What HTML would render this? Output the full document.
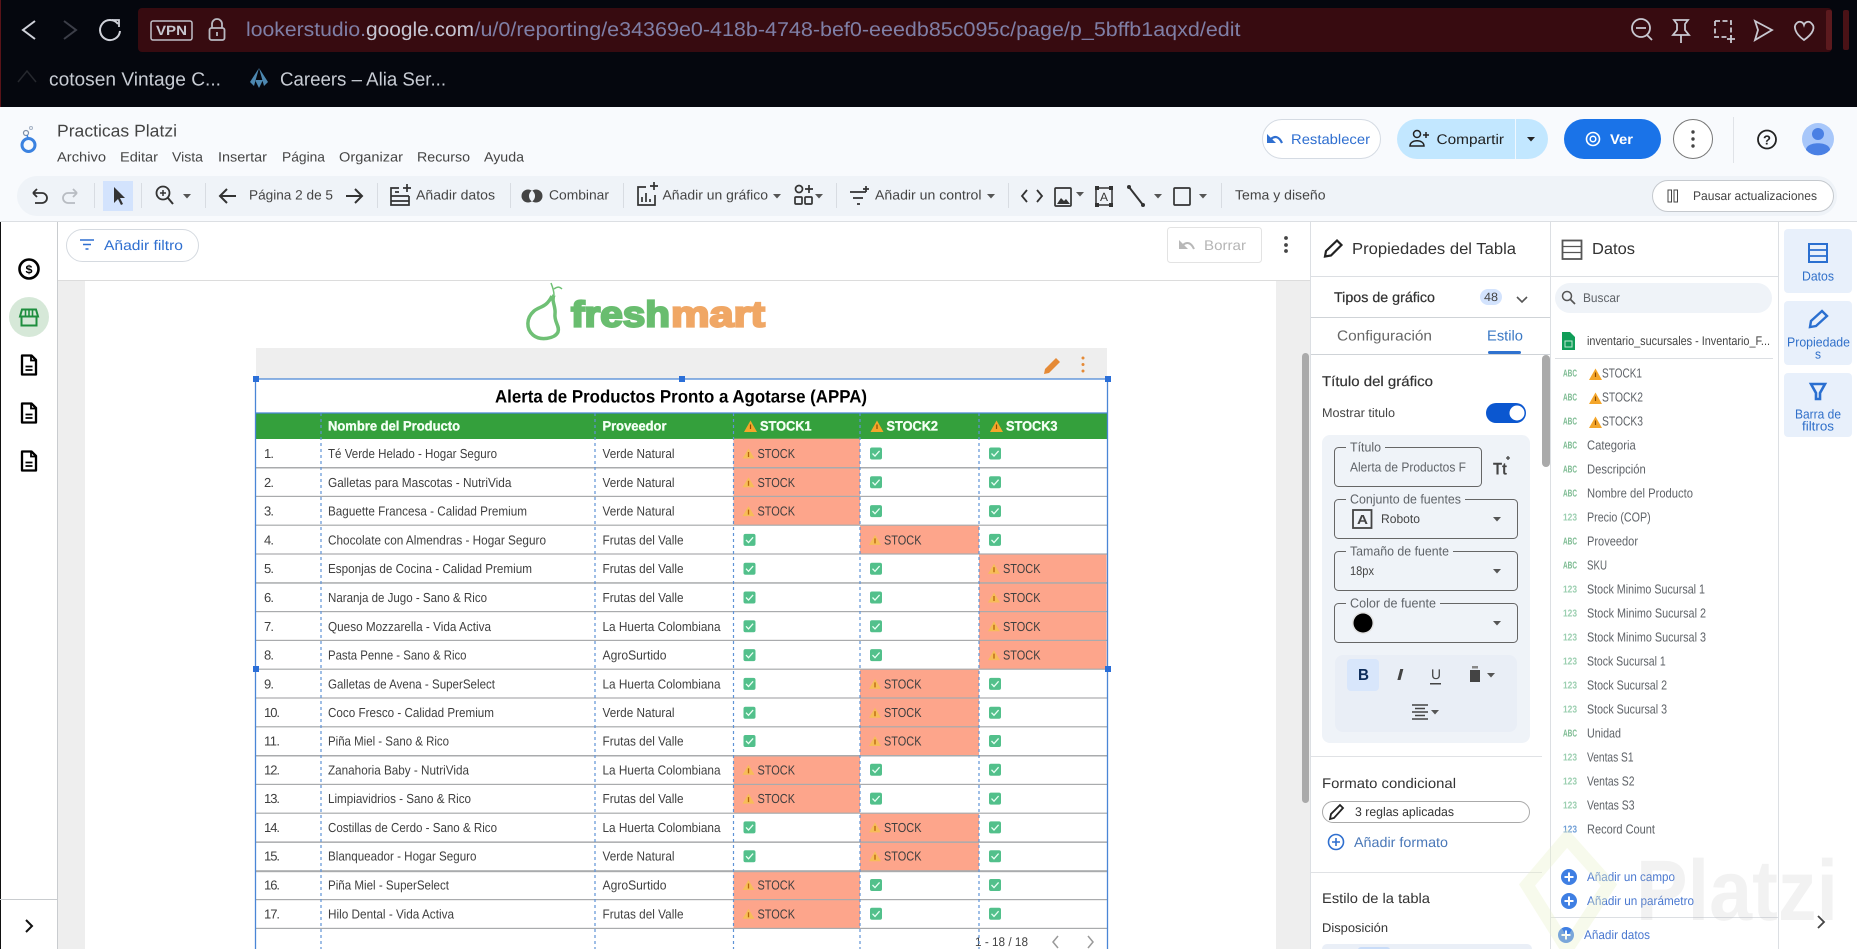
<!DOCTYPE html>
<html lang="es"><head><meta charset="utf-8"><title>Looker Studio</title>
<style>
html,body{margin:0;padding:0;background:#fff;width:1857px;height:949px;overflow:hidden}
svg{display:block;filter:blur(.35px)}
text{font-family:"Liberation Sans",sans-serif;dominant-baseline:central;fill:#444;text-rendering:geometricPrecision}
.t text{font-size:13px;fill:#3f3f3f}
.f text{font-size:13px;fill:#5f6368}
.ty{font-size:10px;font-weight:bold}
.h{fill:#f3fff3;stroke:#f3fff3;stroke-width:.35}
</style></head><body>
<svg xmlns="http://www.w3.org/2000/svg" width="1857" height="949" viewBox="0 0 1857 949">
<defs>
<g id="w"><path d="M15-5 21 5H9Z" fill="#f7bd58"/><path d="M15-1.500V3.500" stroke="#b8650c" stroke-width="1.300"/></g>
<g id="k"><rect x="10" y="-6" width="12" height="12" rx="2" fill="#52c08b"/><path d="M12.500 0 15 2.600 19.600-2.600" fill="none" stroke="#eafff4" stroke-width="1.300"/></g>
<g id="W"><path d="M6.500-6.500 13 5H0Z" fill="#f4a62a"/><path d="M6.500-2.500V2" stroke="#8a4a00" stroke-width="1.200"/></g>
<g id="d"><path d="M-7-9.500H2.500L7-5V9.500H-7Z" fill="#fff" stroke="#000" stroke-width="2.300" stroke-linejoin="round"/><path d="M2-9V-4.500H7" fill="none" stroke="#000" stroke-width="1.800"/><path d="M-3.500 1.500H3.500M-3.500 5H3.500" stroke="#000" stroke-width="1.800"/></g>
<g id="a"><path d="M-4-2H4L0 2.500Z" fill="#555"/></g>
<g id="p"><circle r="8" fill="#3f7fe3"/><path d="M-4.500 0H4.500M0-4.500V4.500" stroke="#fff" stroke-width="2"/></g>
</defs>

<!-- browser chrome -->
<rect width="1857" height="107" fill="#05070e"/>
<rect width="1" height="107" fill="#5a1318"/>
<rect x="138" y="8" width="1694" height="44" rx="4" fill="#370b10"/>
<rect x="1826" y="10" width="6" height="40" rx="2" fill="#5c1a1e"/>
<rect x="1843" y="10" width="6" height="40" rx="2" fill="#4a1216"/>
<path d="M35 21 23 30 35 39" fill="none" stroke="#d0d2da" stroke-width="2"/>
<path d="M64 21 76 30 64 39" fill="none" stroke="#3c3e48" stroke-width="2"/>
<path d="M118 24A10 10 0 1 0 120 31" fill="none" stroke="#d0d2da" stroke-width="2"/><path d="M112 20 119 20 119 27" fill="none" stroke="#d0d2da" stroke-width="1.800"/>
<rect x="151" y="21" width="41" height="19" rx="2" fill="none" stroke="#c0c0c8" stroke-width="1.500"/>
<text x="156" y="30.500" font-size="13.500" textLength="31" lengthAdjust="spacingAndGlyphs" style="fill:#c8c8d0;font-weight:bold">VPN</text>
<rect x="209.500" y="28" width="15" height="12" rx="2" fill="none" stroke="#b8b8c0" stroke-width="1.800"/><path d="M212 28V24A5 5 0 0 1 222 24V28" fill="none" stroke="#b8b8c0" stroke-width="1.800"/><path d="M217 32V36" stroke="#b8b8c0" stroke-width="1.800"/>
<text x="246" y="30" font-size="20" textLength="120" lengthAdjust="spacingAndGlyphs" style="fill:#7f7fa6">lookerstudio.</text>
<text x="366" y="30" font-size="20" textLength="108" lengthAdjust="spacingAndGlyphs" style="fill:#c5c5d2">google.com</text>
<text x="474.500" y="30" font-size="20" textLength="766" lengthAdjust="spacingAndGlyphs" style="fill:#7f7fa6">/u/0/reporting/e34369e0-418b-4748-bef0-eeedb85c095c/page/p_5bffb1aqxd/edit</text>
<g fill="none" stroke="#c8c8d0" stroke-width="1.800">
<circle cx="1641" cy="28" r="9"/><path d="M1636 28H1646M1647 35 1652 40"/>
<path d="M1674 20H1688L1685 24V30L1689 35H1673L1677 30V24ZM1681 35V43"/>
<path d="M1715 21H1731V37M1715 21V37H1727" stroke-dasharray="5 2.500"/><path d="M1731 35V43M1727 39H1735"/>
<path d="M1755 21 1772 30 1755 40 1758 30Z"/>
<path d="M1804 40C1794 33 1794 26 1796 24C1799 20 1803 22 1804 25C1805 22 1809 20 1812 24C1815 27 1814 33 1804 40Z"/>
</g>
<path d="M18 82 27 71 36 82" fill="none" stroke="#26282e" stroke-width="1.500"/>
<text x="49" y="80" font-size="19" textLength="172" lengthAdjust="spacingAndGlyphs" style="fill:#c8ccd4">cotosen Vintage C...</text>
<path d="M259 68 250 82 254 86ZM259 68 268 82 264 86ZM255 80H263L259 88Z" fill="#4d87b0"/>
<text x="280" y="80" font-size="19" textLength="166" lengthAdjust="spacingAndGlyphs" style="fill:#c8ccd4">Careers – Alia Ser...</text>

<!-- app header -->
<rect y="107" width="1857" height="114" fill="#f8fafd"/>
<circle cx="28.500" cy="145" r="6.500" fill="none" stroke="#3b82e0" stroke-width="3"/>
<circle cx="26" cy="133" r="2.500" fill="none" stroke="#7e8fa8" stroke-width="1.200"/><circle cx="31" cy="128" r="1.500" fill="none" stroke="#a5b2c5" stroke-width="1"/>
<path d="M27 135 28 138" stroke="#3b82e0" stroke-width="1.500"/>
<text x="57" y="131" font-size="17" textLength="120" lengthAdjust="spacingAndGlyphs" style="fill:#444">Practicas Platzi</text>
<g font-size="13.500">
<text x="57" y="157" textLength="49" lengthAdjust="spacingAndGlyphs">Archivo</text>
<text x="120" y="157" textLength="38" lengthAdjust="spacingAndGlyphs">Editar</text>
<text x="172" y="157" textLength="31" lengthAdjust="spacingAndGlyphs">Vista</text>
<text x="218" y="157" textLength="49" lengthAdjust="spacingAndGlyphs">Insertar</text>
<text x="282" y="157" textLength="43" lengthAdjust="spacingAndGlyphs">Página</text>
<text x="339" y="157" textLength="64" lengthAdjust="spacingAndGlyphs">Organizar</text>
<text x="417" y="157" textLength="53" lengthAdjust="spacingAndGlyphs">Recurso</text>
<text x="484" y="157" textLength="40" lengthAdjust="spacingAndGlyphs">Ayuda</text>
</g>
<!-- header buttons -->
<rect x="1262.500" y="119.500" width="118" height="39" rx="19.500" fill="#fff" stroke="#d5dbe3"/>
<path d="M1267 134V143H1276Z" fill="#2f6fd0"/><path d="M1271 139C1275 135.500 1279 136.500 1282 143" fill="none" stroke="#2f6fd0" stroke-width="2.200"/>
<text x="1291" y="139" font-size="14" textLength="79" lengthAdjust="spacingAndGlyphs" style="fill:#2f6fd0">Restablecer</text>
<rect x="1397" y="119" width="151" height="40" rx="20" fill="#c2e7ff"/><rect x="1515" y="119" width="1" height="40" fill="#f0f8ff"/>
<circle cx="1417" cy="134" r="3.500" fill="none" stroke="#222" stroke-width="1.500"/><path d="M1410 146C1410 139 1424 139 1424 146Z" fill="none" stroke="#222" stroke-width="1.500"/><path d="M1423 135H1429M1426 132V138" stroke="#222" stroke-width="1.500"/>
<text x="1436.500" y="139" font-size="14" textLength="67.500" lengthAdjust="spacingAndGlyphs" style="fill:#1f1f1f">Compartir</text>
<path d="M1527 137H1535L1531 141.500Z" fill="#222"/>
<rect x="1564" y="119" width="97" height="40" rx="20" fill="#1a73e8"/>
<circle cx="1593" cy="139" r="6.500" fill="none" stroke="#fff" stroke-width="1.600"/><circle cx="1593" cy="139" r="2.800" fill="none" stroke="#fff" stroke-width="1.500"/>
<text x="1610" y="139" font-size="14" font-weight="bold" textLength="23" lengthAdjust="spacingAndGlyphs" style="fill:#fff">Ver</text>
<rect x="1673.500" y="119.500" width="39" height="39" rx="19.500" fill="#fff" stroke="#777"/>
<circle cx="1693" cy="132" r="1.700" fill="#444"/><circle cx="1693" cy="139" r="1.700" fill="#444"/><circle cx="1693" cy="146" r="1.700" fill="#444"/>
<rect x="1733" y="117" width="1" height="46" fill="#e0e3e8"/>
<circle cx="1767" cy="139.500" r="9" fill="none" stroke="#222" stroke-width="1.800"/><text x="1763" y="140" font-size="13" font-weight="bold" textLength="8" lengthAdjust="spacingAndGlyphs" style="fill:#222">?</text>
<circle cx="1818" cy="139" r="16" fill="#a8c7fa"/><circle cx="1818" cy="134" r="6" fill="#4a80e4"/><path d="M1806 150C1806 141 1830 141 1830 150A16 16 0 0 1 1806 150Z" fill="#4a80e4"/>
<!-- toolbar -->
<rect x="17" y="176" width="1820" height="40" rx="20" fill="#eff3f8"/>
<rect y="221" width="1857" height="1" fill="#dcdfe3"/>
<g fill="#d8dce2"><rect x="94" y="183" width="1" height="25"/><rect x="141" y="183" width="1" height="25"/><rect x="205" y="183" width="1" height="25"/><rect x="377" y="183" width="1" height="25"/><rect x="510" y="183" width="1" height="25"/><rect x="623" y="183" width="1" height="25"/><rect x="836" y="183" width="1" height="25"/><rect x="1008" y="183" width="1" height="25"/><rect x="1221" y="183" width="1" height="25"/></g>
<path d="M33 193 37 189M33 193 37 197M33 193H42A5 5 0 0 1 42 203H35" fill="none" stroke="#333" stroke-width="1.800"/>
<path d="M77 193 73 189M77 193 73 197M77 193H68A5 5 0 0 0 68 203H75" fill="none" stroke="#b8bcc2" stroke-width="1.800"/>
<rect x="103" y="181" width="30" height="30" fill="#d3e3fd"/>
<path d="M114 187V203L118 199 121 205 123 204 120 198H125Z" fill="#333"/>
<circle cx="163" cy="193" r="6.500" fill="none" stroke="#333" stroke-width="1.800"/><path d="M168 198 173 204" stroke="#333" stroke-width="2"/><path d="M160 193H166M163 190V196" stroke="#333" stroke-width="1.500"/>
<use href="#a" x="187" y="196"/>
<path d="M236 196H221M227 189 220 196 227 203" fill="none" stroke="#333" stroke-width="2"/>
<text x="249" y="195" font-size="13.500" textLength="84" lengthAdjust="spacingAndGlyphs">Página 2 de 5</text>
<path d="M346 196H361M355 189 362 196 355 203" fill="none" stroke="#333" stroke-width="2"/>
<path d="M399 188H391V205H409V196M391 196H409M391 201H409" fill="none" stroke="#333" stroke-width="1.700"/><path d="M403 188H411M407 184V192M395 192H399" stroke="#333" stroke-width="1.700"/>
<text x="416" y="195" font-size="13.500" textLength="79" lengthAdjust="spacingAndGlyphs">Añadir datos</text>
<circle cx="528" cy="196" r="6.500" fill="#444"/><circle cx="536" cy="196" r="6.500" fill="#444"/><path d="M532 190.500A6.500 6.500 0 0 1 532 201.500A6.500 6.500 0 0 1 532 190.500Z" fill="#eff3f8"/>
<text x="549" y="195" font-size="13.500" textLength="60" lengthAdjust="spacingAndGlyphs">Combinar</text>
<path d="M646 187H638V205H655V195" fill="none" stroke="#333" stroke-width="1.700"/><path d="M650 186H658M654 182V190M642 202V197M646 202V193M650 202V199" stroke="#333" stroke-width="1.700"/>
<text x="662.500" y="195" font-size="13.500" textLength="105.500" lengthAdjust="spacingAndGlyphs">Añadir un gráfico</text><use href="#a" x="777" y="196"/>
<circle cx="799" cy="189" r="3.500" fill="none" stroke="#333" stroke-width="1.700"/><path d="M805 189H813M809 185V193" stroke="#333" stroke-width="1.700"/><rect x="795" y="197" width="7" height="7" rx="1" fill="none" stroke="#333" stroke-width="1.700"/><rect x="805" y="197" width="7" height="7" rx="1" fill="none" stroke="#333" stroke-width="1.700"/><use href="#a" x="819" y="196"/>
<path d="M850 192H866M853 198H863M857 204H860M866 186V192M863 189H869" stroke="#333" stroke-width="1.700" fill="none"/>
<text x="875" y="195" font-size="13.500" textLength="106.500" lengthAdjust="spacingAndGlyphs">Añadir un control</text><use href="#a" x="991" y="196"/>
<path d="M1027 190 1022 196 1027 202M1037 190 1042 196 1037 202" fill="none" stroke="#333" stroke-width="1.800"/>
<rect x="1055" y="188" width="16" height="18" rx="1" fill="none" stroke="#333" stroke-width="1.700"/><path d="M1057 204 1061 198 1064 201 1066 199 1070 204Z" fill="#333"/><use href="#a" x="1080" y="194"/>
<rect x="1096" y="188" width="16" height="17" fill="none" stroke="#333" stroke-width="1.500"/><text x="1100" y="197" font-size="12" textLength="8" lengthAdjust="spacingAndGlyphs" style="fill:#333">A</text><rect x="1095" y="186" width="4" height="4" fill="#333"/><rect x="1109" y="186" width="4" height="4" fill="#333"/><rect x="1095" y="203" width="4" height="4" fill="#333"/><rect x="1109" y="203" width="4" height="4" fill="#333"/>
<path d="M1129 187 1143 205" stroke="#333" stroke-width="2"/><circle cx="1129" cy="187" r="2" fill="#333"/><circle cx="1143" cy="205" r="2" fill="#333"/><use href="#a" x="1158" y="196"/>
<rect x="1174" y="188" width="16" height="17" rx="1" fill="none" stroke="#333" stroke-width="1.700"/><use href="#a" x="1203" y="196"/>
<text x="1235" y="195" font-size="13.500" textLength="90.500" lengthAdjust="spacingAndGlyphs">Tema y diseño</text>
<rect x="1652.500" y="180.500" width="181" height="31" rx="15.500" fill="#fff" stroke="#c5c9ce"/>
<rect x="1668" y="190" width="3.500" height="12" fill="none" stroke="#444"/><rect x="1674" y="190" width="3.500" height="12" fill="none" stroke="#444"/>
<text x="1693" y="196" font-size="12.500" textLength="124" lengthAdjust="spacingAndGlyphs">Pausar actualizaciones</text>

<!-- left rail -->
<rect y="222" width="57" height="727" fill="#fff"/><rect y="222" width="1" height="727" fill="#111"/>
<rect x="57" y="222" width="1" height="727" fill="#c9cccf"/>
<circle cx="29" cy="269" r="9.500" fill="none" stroke="#000" stroke-width="2.600"/><text x="25.500" y="269.500" font-size="12" font-weight="bold" textLength="7" lengthAdjust="spacingAndGlyphs" style="fill:#000">$</text>
<circle cx="29" cy="317" r="20" fill="#d6e8d8"/>
<path d="M22 309.500H36L38 316.500H20ZM21.500 317V325.500H36.500V317" fill="none" stroke="#1e8e3e" stroke-width="2"/><path d="M25.500 310V316M29 310V316M32.500 310V316" stroke="#1e8e3e" stroke-width="1.600"/>
<use href="#d" x="29" y="365"/><use href="#d" x="29" y="413"/><use href="#d" x="29" y="461"/>
<rect y="899" width="57" height="1" fill="#c9cccf"/>
<path d="M26 920 32 926 26 932" fill="none" stroke="#111" stroke-width="2"/>

<!-- filter bar -->
<rect x="58" y="222" width="1252" height="58" fill="#fff"/><rect x="58" y="280" width="1252" height="1" fill="#dcdcdc"/>
<rect x="66.500" y="229.500" width="132" height="32" rx="16" fill="#fff" stroke="#d5dae0"/>
<path d="M80 240H94M83 244.500H91M85.500 249H88.500" stroke="#2f6fd0" stroke-width="1.500"/>
<text x="104" y="245" font-size="14" textLength="79" lengthAdjust="spacingAndGlyphs" style="fill:#2f6fd0">Añadir filtro</text>
<rect x="1167.500" y="227.500" width="94" height="35" rx="3" fill="#fff" stroke="#e3e3e3"/>
<path d="M1179 240V249H1188Z" fill="#b8b8b8"/><path d="M1183 245C1187 241.500 1191 242.500 1194 249" fill="none" stroke="#b8b8b8" stroke-width="2"/>
<text x="1204" y="245" font-size="14" textLength="42" lengthAdjust="spacingAndGlyphs" style="fill:#b5b5b5">Borrar</text>
<circle cx="1286" cy="238" r="1.900" fill="#444"/><circle cx="1286" cy="245" r="1.900" fill="#444"/><circle cx="1286" cy="251" r="1.900" fill="#444"/>

<!-- canvas -->
<rect x="58" y="281" width="27" height="668" fill="#eee"/>
<rect x="85" y="281" width="1191" height="668" fill="#fff"/>
<rect x="1276" y="281" width="34" height="668" fill="#eee"/>
<rect x="1302" y="353" width="7" height="450" rx="3.500" fill="#aaa"/>

<!-- logo -->
<path d="M554 295C551 301 556 306 555 314C554 322 560 326 558 332C555 339 540 341 533 335C526 329 526 318 534 311C540 306 546 308 552 296" fill="none" stroke="#6fc075" stroke-width="3.500"/>
<path d="M554 295C554 291 553 288 551 283M554 289C558 286 560 287 562 289" fill="none" stroke="#6fc075" stroke-width="1.500"/>
<text x="571" y="314" font-size="36" font-weight="bold" textLength="99" lengthAdjust="spacingAndGlyphs" style="fill:#69bd6f;stroke:#69bd6f;stroke-width:2.200">fresh</text>
<text x="671" y="314" font-size="36" font-weight="bold" textLength="94" lengthAdjust="spacingAndGlyphs" style="fill:#f0a765;stroke:#f0a765;stroke-width:2.200">mart</text>

<!-- table -->
<rect x="256" y="348" width="851" height="31" fill="#eee"/>
<path d="M1045 369 1056 358 1060 362 1049 373 1044 374Z" fill="#e58a36"/>
<circle cx="1083" cy="358" r="1.500" fill="#e58a36"/><circle cx="1083" cy="364.500" r="1.500" fill="#e58a36"/><circle cx="1083" cy="371" r="1.500" fill="#e58a36"/>
<rect x="256" y="379" width="851" height="570" fill="#fff"/>
<text x="495" y="396.500" font-size="18" font-weight="bold" textLength="372" lengthAdjust="spacingAndGlyphs" style="fill:#000">Alerta de Productos Pronto a Agotarse (APPA)</text>
<rect x="256" y="413" width="851" height="26" fill="#34a03c"/>
<text class="h" x="328" y="426" font-size="13.500" font-weight="bold" textLength="132" lengthAdjust="spacingAndGlyphs">Nombre del Producto</text>
<text class="h" x="602.500" y="426" font-size="13.500" font-weight="bold" textLength="64" lengthAdjust="spacingAndGlyphs">Proveedor</text>
<text class="h" x="760" y="426" font-size="13.500" font-weight="bold" textLength="51.500" lengthAdjust="spacingAndGlyphs">STOCK1</text>
<text class="h" x="886.500" y="426" font-size="13.500" font-weight="bold" textLength="51.500" lengthAdjust="spacingAndGlyphs">STOCK2</text>
<text class="h" x="1006" y="426" font-size="13.500" font-weight="bold" textLength="51.500" lengthAdjust="spacingAndGlyphs">STOCK3</text>
<use href="#W" x="744" y="427"/><use href="#W" x="870.500" y="427"/><use href="#W" x="990" y="427"/>

<g class="t">
<g transform="translate(0,453.500)"><rect x="733.500" y="-14.800" width="126.500" height="28.800" fill="#fda58b"/><text x="264" textLength="10">1.</text><text x="328" textLength="169" lengthAdjust="spacingAndGlyphs">Té Verde Helado - Hogar Seguro</text><text x="602.500" textLength="72" lengthAdjust="spacingAndGlyphs">Verde Natural</text><use href="#w" x="733.500"/><text x="757.500" textLength="37.500" lengthAdjust="spacingAndGlyphs">STOCK</text><use href="#k" x="860"/><use href="#k" x="979"/></g>
<g transform="translate(0,482.300)"><rect x="733.500" y="-14.800" width="126.500" height="28.800" fill="#fda58b"/><text x="264" textLength="10">2.</text><text x="328" textLength="183.500" lengthAdjust="spacingAndGlyphs">Galletas para Mascotas - NutriVida</text><text x="602.500" textLength="72" lengthAdjust="spacingAndGlyphs">Verde Natural</text><use href="#w" x="733.500"/><text x="757.500" textLength="37.500" lengthAdjust="spacingAndGlyphs">STOCK</text><use href="#k" x="860"/><use href="#k" x="979"/></g>
<g transform="translate(0,511.100)"><rect x="733.500" y="-14.800" width="126.500" height="28.800" fill="#fda58b"/><text x="264" textLength="10">3.</text><text x="328" textLength="199" lengthAdjust="spacingAndGlyphs">Baguette Francesa - Calidad Premium</text><text x="602.500" textLength="72" lengthAdjust="spacingAndGlyphs">Verde Natural</text><use href="#w" x="733.500"/><text x="757.500" textLength="37.500" lengthAdjust="spacingAndGlyphs">STOCK</text><use href="#k" x="860"/><use href="#k" x="979"/></g>
<g transform="translate(0,539.900)"><rect x="860" y="-14.800" width="119" height="28.800" fill="#fda58b"/><text x="264" textLength="10">4.</text><text x="328" textLength="218" lengthAdjust="spacingAndGlyphs">Chocolate con Almendras - Hogar Seguro</text><text x="602.500" textLength="81" lengthAdjust="spacingAndGlyphs">Frutas del Valle</text><use href="#k" x="733.500"/><use href="#w" x="860"/><text x="884" textLength="37.500" lengthAdjust="spacingAndGlyphs">STOCK</text><use href="#k" x="979"/></g>
<g transform="translate(0,568.700)"><rect x="979" y="-14.800" width="127.500" height="28.800" fill="#fda58b"/><text x="264" textLength="10">5.</text><text x="328" textLength="204" lengthAdjust="spacingAndGlyphs">Esponjas de Cocina - Calidad Premium</text><text x="602.500" textLength="81" lengthAdjust="spacingAndGlyphs">Frutas del Valle</text><use href="#k" x="733.500"/><use href="#k" x="860"/><use href="#w" x="979"/><text x="1003" textLength="37.500" lengthAdjust="spacingAndGlyphs">STOCK</text></g>
<g transform="translate(0,597.500)"><rect x="979" y="-14.800" width="127.500" height="28.800" fill="#fda58b"/><text x="264" textLength="10">6.</text><text x="328" textLength="159" lengthAdjust="spacingAndGlyphs">Naranja de Jugo - Sano &amp; Rico</text><text x="602.500" textLength="81" lengthAdjust="spacingAndGlyphs">Frutas del Valle</text><use href="#k" x="733.500"/><use href="#k" x="860"/><use href="#w" x="979"/><text x="1003" textLength="37.500" lengthAdjust="spacingAndGlyphs">STOCK</text></g>
<g transform="translate(0,626.300)"><rect x="979" y="-14.800" width="127.500" height="28.800" fill="#fda58b"/><text x="264" textLength="10">7.</text><text x="328" textLength="163" lengthAdjust="spacingAndGlyphs">Queso Mozzarella - Vida Activa</text><text x="602.500" textLength="118" lengthAdjust="spacingAndGlyphs">La Huerta Colombiana</text><use href="#k" x="733.500"/><use href="#k" x="860"/><use href="#w" x="979"/><text x="1003" textLength="37.500" lengthAdjust="spacingAndGlyphs">STOCK</text></g>
<g transform="translate(0,655.100)"><rect x="979" y="-14.800" width="127.500" height="28.800" fill="#fda58b"/><text x="264" textLength="10">8.</text><text x="328" textLength="138.500" lengthAdjust="spacingAndGlyphs">Pasta Penne - Sano &amp; Rico</text><text x="602.500" textLength="64" lengthAdjust="spacingAndGlyphs">AgroSurtido</text><use href="#k" x="733.500"/><use href="#k" x="860"/><use href="#w" x="979"/><text x="1003" textLength="37.500" lengthAdjust="spacingAndGlyphs">STOCK</text></g>
<g transform="translate(0,683.900)"><rect x="860" y="-14.800" width="119" height="28.800" fill="#fda58b"/><text x="264" textLength="10">9.</text><text x="328" textLength="167" lengthAdjust="spacingAndGlyphs">Galletas de Avena - SuperSelect</text><text x="602.500" textLength="118" lengthAdjust="spacingAndGlyphs">La Huerta Colombiana</text><use href="#k" x="733.500"/><use href="#w" x="860"/><text x="884" textLength="37.500" lengthAdjust="spacingAndGlyphs">STOCK</text><use href="#k" x="979"/></g>
<g transform="translate(0,712.700)"><rect x="860" y="-14.800" width="119" height="28.800" fill="#fda58b"/><text x="264" textLength="16">10.</text><text x="328" textLength="166" lengthAdjust="spacingAndGlyphs">Coco Fresco - Calidad Premium</text><text x="602.500" textLength="72" lengthAdjust="spacingAndGlyphs">Verde Natural</text><use href="#k" x="733.500"/><use href="#w" x="860"/><text x="884" textLength="37.500" lengthAdjust="spacingAndGlyphs">STOCK</text><use href="#k" x="979"/></g>
<g transform="translate(0,741)"><rect x="860" y="-14.300" width="119" height="28.800" fill="#fda58b"/><text x="264" textLength="16">11.</text><text x="328" textLength="121" lengthAdjust="spacingAndGlyphs">Piña Miel - Sano &amp; Rico</text><text x="602.500" textLength="81" lengthAdjust="spacingAndGlyphs">Frutas del Valle</text><use href="#k" x="733.500"/><use href="#w" x="860"/><text x="884" textLength="37.500" lengthAdjust="spacingAndGlyphs">STOCK</text><use href="#k" x="979"/></g>
<g transform="translate(0,769.800)"><rect x="733.500" y="-14.300" width="126.500" height="28.800" fill="#fda58b"/><text x="264" textLength="16">12.</text><text x="328" textLength="141" lengthAdjust="spacingAndGlyphs">Zanahoria Baby - NutriVida</text><text x="602.500" textLength="118" lengthAdjust="spacingAndGlyphs">La Huerta Colombiana</text><use href="#w" x="733.500"/><text x="757.500" textLength="37.500" lengthAdjust="spacingAndGlyphs">STOCK</text><use href="#k" x="860"/><use href="#k" x="979"/></g>
<g transform="translate(0,798.600)"><rect x="733.500" y="-14.300" width="126.500" height="28.800" fill="#fda58b"/><text x="264" textLength="16">13.</text><text x="328" textLength="143" lengthAdjust="spacingAndGlyphs">Limpiavidrios - Sano &amp; Rico</text><text x="602.500" textLength="81" lengthAdjust="spacingAndGlyphs">Frutas del Valle</text><use href="#w" x="733.500"/><text x="757.500" textLength="37.500" lengthAdjust="spacingAndGlyphs">STOCK</text><use href="#k" x="860"/><use href="#k" x="979"/></g>
<g transform="translate(0,827.400)"><rect x="860" y="-14.300" width="119" height="28.800" fill="#fda58b"/><text x="264" textLength="16">14.</text><text x="328" textLength="169" lengthAdjust="spacingAndGlyphs">Costillas de Cerdo - Sano &amp; Rico</text><text x="602.500" textLength="118" lengthAdjust="spacingAndGlyphs">La Huerta Colombiana</text><use href="#k" x="733.500"/><use href="#w" x="860"/><text x="884" textLength="37.500" lengthAdjust="spacingAndGlyphs">STOCK</text><use href="#k" x="979"/></g>
<g transform="translate(0,856.200)"><rect x="860" y="-14.300" width="119" height="28.800" fill="#fda58b"/><text x="264" textLength="16">15.</text><text x="328" textLength="148.500" lengthAdjust="spacingAndGlyphs">Blanqueador - Hogar Seguro</text><text x="602.500" textLength="72" lengthAdjust="spacingAndGlyphs">Verde Natural</text><use href="#k" x="733.500"/><use href="#w" x="860"/><text x="884" textLength="37.500" lengthAdjust="spacingAndGlyphs">STOCK</text><use href="#k" x="979"/></g>
<g transform="translate(0,885)"><rect x="733.500" y="-14.300" width="126.500" height="28.800" fill="#fda58b"/><text x="264" textLength="16">16.</text><text x="328" textLength="121" lengthAdjust="spacingAndGlyphs">Piña Miel - SuperSelect</text><text x="602.500" textLength="64" lengthAdjust="spacingAndGlyphs">AgroSurtido</text><use href="#w" x="733.500"/><text x="757.500" textLength="37.500" lengthAdjust="spacingAndGlyphs">STOCK</text><use href="#k" x="860"/><use href="#k" x="979"/></g>
<g transform="translate(0,913.800)"><rect x="733.500" y="-14.300" width="126.500" height="28.800" fill="#fda58b"/><text x="264" textLength="16">17.</text><text x="328" textLength="126" lengthAdjust="spacingAndGlyphs">Hilo Dental - Vida Activa</text><text x="602.500" textLength="81" lengthAdjust="spacingAndGlyphs">Frutas del Valle</text><use href="#w" x="733.500"/><text x="757.500" textLength="37.500" lengthAdjust="spacingAndGlyphs">STOCK</text><use href="#k" x="860"/><use href="#k" x="979"/></g>
</g>
<g fill="#a9abad">
<rect x="256" y="467" width="851" height="1.500"/><rect x="256" y="495.800" width="851" height="1.200"/><rect x="256" y="524.600" width="851" height="1.200"/><rect x="256" y="553.400" width="851" height="1.200"/><rect x="256" y="582.200" width="851" height="1.500"/><rect x="256" y="611" width="851" height="1.200"/><rect x="256" y="639.800" width="851" height="1.200"/><rect x="256" y="668.600" width="851" height="1.200"/><rect x="256" y="697.400" width="851" height="1.200"/><rect x="256" y="726.200" width="851" height="1.200"/><rect x="256" y="755" width="851" height="1.500"/><rect x="256" y="783.800" width="851" height="1.200"/><rect x="256" y="812.600" width="851" height="1.200"/><rect x="256" y="841.400" width="851" height="1.500"/><rect x="256" y="870.200" width="851" height="2"/><rect x="256" y="899" width="851" height="1.200"/><rect x="256" y="927.800" width="851" height="1.200"/>
</g>
<text x="975" y="942" font-size="12.500" textLength="53" lengthAdjust="spacingAndGlyphs">1 - 18 / 18</text>
<path d="M1058 936 1053 942 1058 948" fill="none" stroke="#999" stroke-width="1.500"/><path d="M1088 936 1093 942 1088 948" fill="none" stroke="#999" stroke-width="1.500"/>
<g stroke="#5f93d6" stroke-width="1.200" stroke-dasharray="3 3" fill="none">
<path d="M321 413V949M595 413V949M733.500 413V949M860 413V949M979 413V949"/>
</g>
<g stroke="#4a86d6" stroke-width="1.300" fill="none"><path d="M255.500 949V379H1107.500V949"/><path d="M256 413H1107"/></g>
<g fill="#2b6fd8"><rect x="253" y="376" width="6" height="6"/><rect x="679" y="376" width="6" height="6"/><rect x="1105" y="376" width="6" height="6"/><rect x="253" y="666" width="6" height="6"/><rect x="1105" y="666" width="6" height="6"/></g>

<!-- properties panel -->
<rect x="1310" y="222" width="240" height="727" fill="#fff"/>
<rect x="1310" y="222" width="1" height="727" fill="#dcdfe3"/><rect x="1550" y="222" width="1" height="727" fill="#dcdfe3"/>
<rect x="1311" y="276" width="239" height="1" fill="#dcdfe3"/>
<path d="M1325 256.500 1326 251 1337 240.500 1341.500 245 1331 255.500Z" fill="none" stroke="#222" stroke-width="2.200"/>
<text x="1352" y="249.500" font-size="16" textLength="164" lengthAdjust="spacingAndGlyphs" style="fill:#333">Propiedades del Tabla</text>
<text x="1334" y="297" font-size="14" textLength="101" lengthAdjust="spacingAndGlyphs" style="fill:#333;stroke:#333;stroke-width:.25">Tipos de gráfico</text>
<rect x="1480" y="289" width="22" height="16" rx="8" fill="#d3e3fd"/><text x="1484" y="297" font-size="12" textLength="14" lengthAdjust="spacingAndGlyphs">48</text>
<path d="M1517 297 1522 302 1527 297" fill="none" stroke="#555" stroke-width="1.600"/>
<rect x="1311" y="317" width="239" height="1" fill="#cfd3d7"/>
<text x="1337" y="336.500" font-size="14.500" textLength="95" lengthAdjust="spacingAndGlyphs" style="fill:#666">Configuración</text>
<text x="1487" y="336.500" font-size="14.500" textLength="36" lengthAdjust="spacingAndGlyphs" style="fill:#3a78c4">Estilo</text>
<rect x="1488" y="351" width="33" height="3" rx="1.500" fill="#2f72cf"/>
<rect x="1311" y="354" width="239" height="1" fill="#cfd3d7"/>
<rect x="1542" y="355" width="8" height="112" rx="4" fill="#aaa"/>
<text x="1322" y="381" font-size="14" textLength="111" lengthAdjust="spacingAndGlyphs" style="fill:#333;stroke:#333;stroke-width:.2">Título del gráfico</text>
<text x="1322" y="413" font-size="12.500" textLength="73" lengthAdjust="spacingAndGlyphs">Mostrar titulo</text>
<rect x="1486" y="403" width="40" height="20" rx="10" fill="#0b57d0"/><circle cx="1517" cy="413" r="7.500" fill="#fff"/>
<rect x="1322" y="435" width="208" height="308" rx="8" fill="#eff3f8"/>
<g fill="none" stroke="#666" stroke-width="1">
<rect x="1334.500" y="447.500" width="147" height="39" rx="4"/>
<rect x="1334.500" y="499.500" width="183" height="39" rx="4"/>
<rect x="1334.500" y="551.500" width="183" height="39" rx="4"/>
<rect x="1334.500" y="603.500" width="183" height="39" rx="4"/>
</g>
<g fill="#eff3f8"><rect x="1346" y="445" width="39" height="5"/><rect x="1346" y="497" width="119" height="5"/><rect x="1346" y="549" width="107" height="5"/><rect x="1346" y="601" width="94" height="5"/></g>
<text x="1350" y="447" font-size="13" textLength="31" lengthAdjust="spacingAndGlyphs" style="fill:#5f6368">Título</text>
<text x="1350" y="467" font-size="13" textLength="116" lengthAdjust="spacingAndGlyphs" style="fill:#5f6368">Alerta de Productos F</text>
<text x="1350" y="499" font-size="13" textLength="111" lengthAdjust="spacingAndGlyphs" style="fill:#5f6368">Conjunto de fuentes</text>
<text x="1381" y="519" font-size="12.500" textLength="39" lengthAdjust="spacingAndGlyphs">Roboto</text>
<text x="1350" y="551" font-size="13" textLength="99" lengthAdjust="spacingAndGlyphs" style="fill:#5f6368">Tamaño de fuente</text>
<text x="1350" y="571" font-size="12.500" textLength="24" lengthAdjust="spacingAndGlyphs">18px</text>
<text x="1350" y="603" font-size="13" textLength="86" lengthAdjust="spacingAndGlyphs" style="fill:#5f6368">Color de fuente</text>
<text x="1493" y="469" font-size="17" font-weight="bold" textLength="14" lengthAdjust="spacingAndGlyphs" style="fill:#444">Tt</text><path d="M1506 458H1510M1508 456V460" stroke="#444" stroke-width="1.300"/>
<rect x="1353" y="510" width="18.500" height="18" fill="none" stroke="#444" stroke-width="1.800"/><text x="1357" y="519.500" font-size="13" font-weight="bold" textLength="11" lengthAdjust="spacingAndGlyphs" style="fill:#444">A</text>
<use href="#a" x="1497" y="519"/><use href="#a" x="1497" y="571"/><use href="#a" x="1497" y="623"/>
<circle cx="1363" cy="623" r="11" fill="#e2e2e2"/><circle cx="1363" cy="623" r="9.500" fill="#000"/>
<rect x="1335" y="655" width="182" height="77" rx="8" fill="#e9eef6"/>
<rect x="1347" y="659" width="32" height="32" rx="4" fill="#d8e6fb"/>
<text x="1358" y="675.500" font-size="16" font-weight="bold" textLength="11" lengthAdjust="spacingAndGlyphs" style="fill:#0d2c5a">B</text>
<text x="1397" y="675.500" font-size="16" font-weight="bold" textLength="6" lengthAdjust="spacingAndGlyphs" style="fill:#444;font-style:italic">I</text>
<text x="1431" y="674" font-size="14" textLength="10" lengthAdjust="spacingAndGlyphs" style="fill:#444">U</text><rect x="1430" y="683" width="11" height="1.500" fill="#444"/>
<rect x="1470" y="670" width="10" height="12" fill="#444"/><rect x="1472" y="666" width="6" height="2.500" fill="#888"/><use href="#a" x="1491" y="675"/>
<path d="M1412 705H1428M1415 708.500H1425M1412 712H1428M1415 715.500H1425M1412 719H1428" stroke="#444" stroke-width="1.500"/><use href="#a" x="1435" y="712"/>
<rect x="1311" y="756" width="231" height="1" fill="#e0e2e5"/>
<text x="1322" y="783" font-size="14" textLength="134" lengthAdjust="spacingAndGlyphs" style="fill:#333">Formato condicional</text>
<rect x="1322.500" y="801.500" width="207" height="21" rx="10.500" fill="#fff" stroke="#aaa"/>
<path d="M1330 819 1331 814 1340 805 1343 808 1334 818Z" fill="none" stroke="#222" stroke-width="1.800"/>
<text x="1355" y="812" font-size="12.500" textLength="99" lengthAdjust="spacingAndGlyphs" style="fill:#333">3 reglas aplicadas</text>
<circle cx="1336" cy="842" r="7.500" fill="none" stroke="#2f6fcf" stroke-width="1.600"/><path d="M1332 842H1340M1336 838V846" stroke="#2f6fcf" stroke-width="1.600"/>
<text x="1354" y="842" font-size="14" textLength="94" lengthAdjust="spacingAndGlyphs" style="fill:#4a78b8">Añadir formato</text>
<rect x="1311" y="872" width="231" height="1" fill="#e0e2e5"/>
<text x="1322" y="898" font-size="14" textLength="108" lengthAdjust="spacingAndGlyphs" style="fill:#333">Estilo de la tabla</text>
<text x="1322" y="928" font-size="12.500" textLength="66" lengthAdjust="spacingAndGlyphs" style="fill:#333">Disposición</text>
<rect x="1322" y="944" width="210" height="10" rx="5" fill="#eaeff7"/><rect x="1358" y="947" width="32" height="6" rx="3" fill="#c9dcf8"/>

<!-- data panel -->
<rect x="1551" y="222" width="227" height="727" fill="#fff"/>
<rect x="1562.500" y="240.500" width="19" height="18.500" fill="none" stroke="#555" stroke-width="1.800"/><path d="M1563 246.500H1581M1563 252.500H1581" stroke="#555" stroke-width="1.300"/>
<text x="1592" y="249.500" font-size="16" textLength="43" lengthAdjust="spacingAndGlyphs" style="fill:#333">Datos</text>
<rect x="1551" y="276" width="227" height="1" fill="#dcdfe3"/>
<rect x="1555" y="283" width="217" height="30" rx="15" fill="#eff3f8"/>
<circle cx="1567" cy="296" r="4.500" fill="none" stroke="#555" stroke-width="1.500"/><path d="M1570.500 299.500 1575 304" stroke="#555" stroke-width="1.700"/>
<text x="1583" y="298" font-size="12.500" textLength="37" lengthAdjust="spacingAndGlyphs" style="fill:#5f6368">Buscar</text>
<path d="M1562 332H1570L1575 337V350H1562Z" fill="#0f9d58"/><rect x="1565" y="341" width="7" height="6" fill="none" stroke="#bfe8d0"/>
<text x="1587" y="341" font-size="12.500" textLength="183" lengthAdjust="spacingAndGlyphs" style="fill:#444">inventario_sucursales - Inventario_F...</text>
<rect x="1555" y="358" width="218" height="1" fill="#dcdfe3"/>
<g class="f">
<text x="1602" y="373" textLength="40" lengthAdjust="spacingAndGlyphs">STOCK1</text><use href="#W" x="1589" y="375"/>
<text x="1602" y="397" textLength="41" lengthAdjust="spacingAndGlyphs">STOCK2</text><use href="#W" x="1589" y="399"/>
<text x="1602" y="421" textLength="41" lengthAdjust="spacingAndGlyphs">STOCK3</text><use href="#W" x="1589" y="423"/>
<text x="1587" y="445" textLength="48.700" lengthAdjust="spacingAndGlyphs">Categoria</text>
<text x="1587" y="469" textLength="58.700" lengthAdjust="spacingAndGlyphs">Descripción</text>
<text x="1587" y="493" textLength="106" lengthAdjust="spacingAndGlyphs">Nombre del Producto</text>
<text x="1587" y="517" textLength="63.700" lengthAdjust="spacingAndGlyphs">Precio (COP)</text>
<text x="1587" y="541" textLength="51" lengthAdjust="spacingAndGlyphs">Proveedor</text>
<text x="1587" y="565" textLength="20" lengthAdjust="spacingAndGlyphs">SKU</text>
<text x="1587" y="589" textLength="118" lengthAdjust="spacingAndGlyphs">Stock Minimo Sucursal 1</text>
<text x="1587" y="613" textLength="119" lengthAdjust="spacingAndGlyphs">Stock Minimo Sucursal 2</text>
<text x="1587" y="637" textLength="119" lengthAdjust="spacingAndGlyphs">Stock Minimo Sucursal 3</text>
<text x="1587" y="661" textLength="78.700" lengthAdjust="spacingAndGlyphs">Stock Sucursal 1</text>
<text x="1587" y="685" textLength="80" lengthAdjust="spacingAndGlyphs">Stock Sucursal 2</text>
<text x="1587" y="709" textLength="80" lengthAdjust="spacingAndGlyphs">Stock Sucursal 3</text>
<text x="1587" y="733" textLength="34" lengthAdjust="spacingAndGlyphs">Unidad</text>
<text x="1587" y="757" textLength="46.500" lengthAdjust="spacingAndGlyphs">Ventas S1</text>
<text x="1587" y="781" textLength="47.500" lengthAdjust="spacingAndGlyphs">Ventas S2</text>
<text x="1587" y="805" textLength="47.500" lengthAdjust="spacingAndGlyphs">Ventas S3</text>
<text x="1587" y="829" textLength="68" lengthAdjust="spacingAndGlyphs">Record Count</text>
</g>
<g font-weight="bold">
<text class="ty" x="1563" y="374" textLength="14" lengthAdjust="spacingAndGlyphs" style="fill:#7dbb92">ABC</text>
<text class="ty" x="1563" y="398" textLength="14" lengthAdjust="spacingAndGlyphs" style="fill:#7dbb92">ABC</text>
<text class="ty" x="1563" y="422" textLength="14" lengthAdjust="spacingAndGlyphs" style="fill:#7dbb92">ABC</text>
<text class="ty" x="1563" y="446" textLength="14" lengthAdjust="spacingAndGlyphs" style="fill:#7dbb92">ABC</text>
<text class="ty" x="1563" y="470" textLength="14" lengthAdjust="spacingAndGlyphs" style="fill:#7dbb92">ABC</text>
<text class="ty" x="1563" y="494" textLength="14" lengthAdjust="spacingAndGlyphs" style="fill:#7dbb92">ABC</text>
<text class="ty" x="1563" y="518" textLength="14" lengthAdjust="spacingAndGlyphs" style="fill:#9bcfb0">123</text>
<text class="ty" x="1563" y="542" textLength="14" lengthAdjust="spacingAndGlyphs" style="fill:#7dbb92">ABC</text>
<text class="ty" x="1563" y="566" textLength="14" lengthAdjust="spacingAndGlyphs" style="fill:#7dbb92">ABC</text>
<text class="ty" x="1563" y="590" textLength="14" lengthAdjust="spacingAndGlyphs" style="fill:#9bcfb0">123</text>
<text class="ty" x="1563" y="614" textLength="14" lengthAdjust="spacingAndGlyphs" style="fill:#9bcfb0">123</text>
<text class="ty" x="1563" y="638" textLength="14" lengthAdjust="spacingAndGlyphs" style="fill:#9bcfb0">123</text>
<text class="ty" x="1563" y="662" textLength="14" lengthAdjust="spacingAndGlyphs" style="fill:#9bcfb0">123</text>
<text class="ty" x="1563" y="686" textLength="14" lengthAdjust="spacingAndGlyphs" style="fill:#9bcfb0">123</text>
<text class="ty" x="1563" y="710" textLength="14" lengthAdjust="spacingAndGlyphs" style="fill:#9bcfb0">123</text>
<text class="ty" x="1563" y="734" textLength="14" lengthAdjust="spacingAndGlyphs" style="fill:#7dbb92">ABC</text>
<text class="ty" x="1563" y="758" textLength="14" lengthAdjust="spacingAndGlyphs" style="fill:#9bcfb0">123</text>
<text class="ty" x="1563" y="782" textLength="14" lengthAdjust="spacingAndGlyphs" style="fill:#9bcfb0">123</text>
<text class="ty" x="1563" y="806" textLength="14" lengthAdjust="spacingAndGlyphs" style="fill:#9bcfb0">123</text>
<text class="ty" x="1563" y="830" textLength="14" lengthAdjust="spacingAndGlyphs" style="fill:#6f9ed6">123</text>
</g>
<rect x="1551" y="917" width="227" height="1" fill="#dcdfe3"/>
<use href="#p" x="1569" y="877"/><use href="#p" x="1569" y="901"/><use href="#p" x="1566" y="935"/>
<text x="1587" y="877" font-size="12.500" textLength="88" lengthAdjust="spacingAndGlyphs" style="fill:#4a78d0">Añadir un campo</text>
<text x="1587" y="901" font-size="12.500" textLength="107" lengthAdjust="spacingAndGlyphs" style="fill:#4a78d0">Añadir un parámetro</text>
<text x="1584" y="935" font-size="12.500" textLength="66" lengthAdjust="spacingAndGlyphs" style="fill:#4a78d0">Añadir datos</text>

<!-- right rail -->
<rect x="1778" y="222" width="79" height="727" fill="#fff"/><rect x="1778" y="222" width="1" height="727" fill="#dcdfe3"/>
<rect x="1784" y="229" width="68" height="64" rx="4" fill="#e8f0fb"/>
<rect x="1809" y="244" width="18" height="18" fill="none" stroke="#2a6fd0" stroke-width="2"/><path d="M1809 250H1827M1809 256H1827" stroke="#2a6fd0" stroke-width="1.700"/>
<text x="1802" y="276" font-size="13" textLength="32" lengthAdjust="spacingAndGlyphs" style="fill:#2f6fc9">Datos</text>
<rect x="1784" y="301" width="68" height="64" rx="4" fill="#e8f0fb"/>
<path d="M1810 327 1811 321 1822 311 1827 316 1816 326Z" fill="none" stroke="#2a6fd0" stroke-width="2.400"/>
<text x="1787" y="342" font-size="13" textLength="63" lengthAdjust="spacingAndGlyphs" style="fill:#2f6fc9">Propiedade</text>
<text x="1815" y="354" font-size="13" textLength="6" lengthAdjust="spacingAndGlyphs" style="fill:#2f6fc9">s</text>
<rect x="1784" y="373" width="68" height="64" rx="4" fill="#e8f0fb"/>
<path d="M1811 384H1825L1820 393V399H1816V393Z" fill="none" stroke="#2a6fd0" stroke-width="2.600"/>
<text x="1795" y="414" font-size="13" textLength="46" lengthAdjust="spacingAndGlyphs" style="fill:#2f6fc9">Barra de</text>
<text x="1802" y="426" font-size="13" textLength="32" lengthAdjust="spacingAndGlyphs" style="fill:#2f6fc9">filtros</text>

<!-- watermark -->
<path d="M1567 838 1609 885 1567 949 1527 885Z" fill="none" stroke="#e8f2c8" stroke-width="13" opacity=".35"/>
<text x="1636" y="891" font-size="86" font-weight="bold" textLength="202" lengthAdjust="spacingAndGlyphs" style="fill:#b5b5b5;opacity:.17">Platzi</text>
<path d="M1818 916 1824 922 1818 928" fill="none" stroke="#444" stroke-width="1.800"/>
</svg>
</body></html>
